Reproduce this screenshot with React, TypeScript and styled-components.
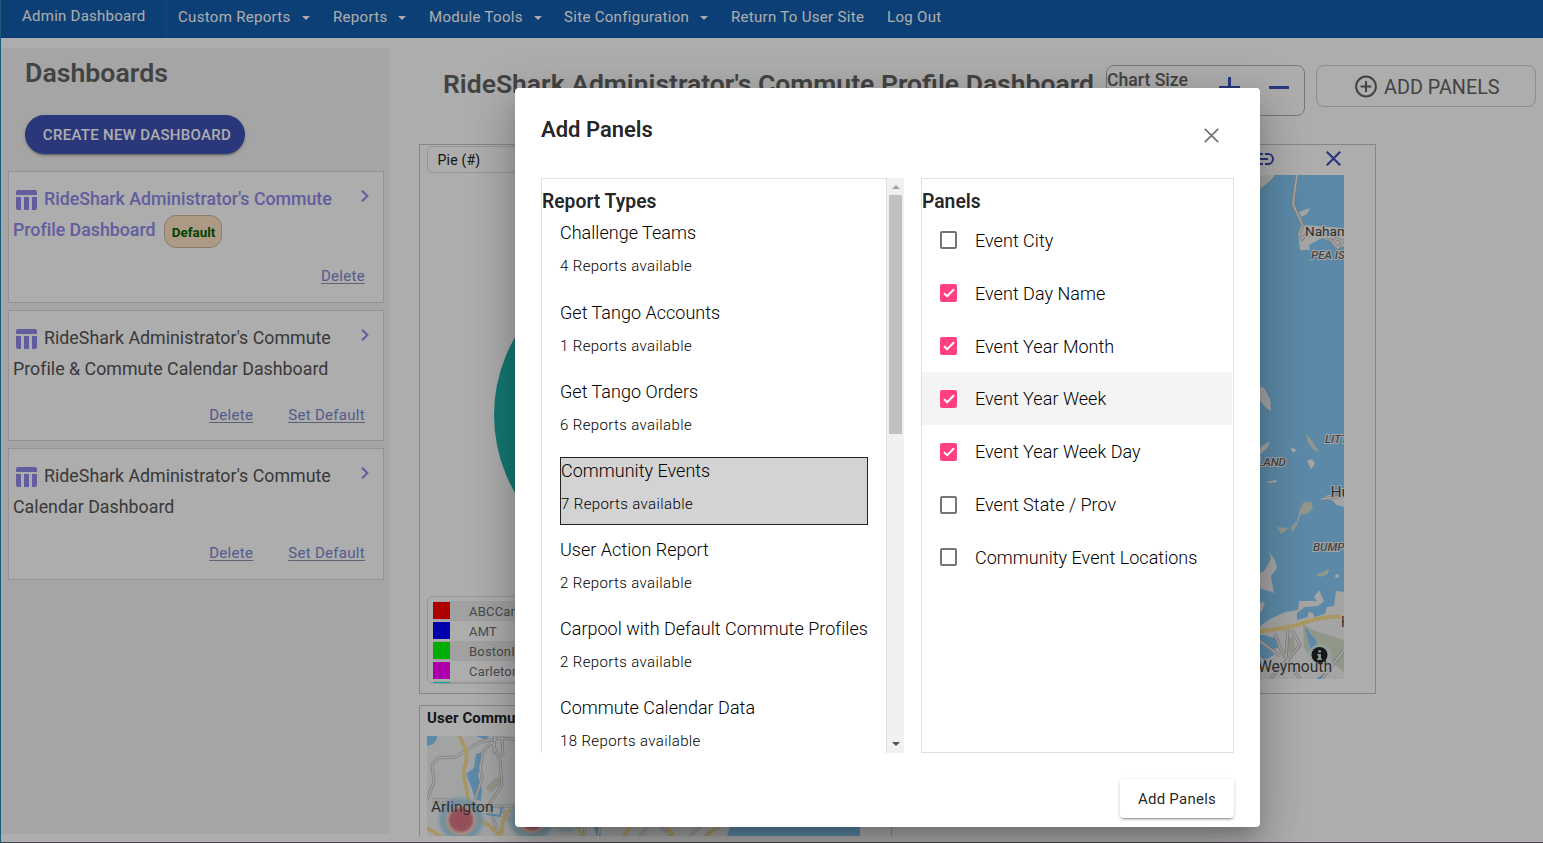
import React from 'react';
import styled, { createGlobalStyle } from 'styled-components';

const GlobalStyle = createGlobalStyle`
  * { box-sizing: border-box; }
  body {
    margin: 0;
    font-family: Roboto, "Liberation Sans", sans-serif;
    background: #fff;
  }
  ul { list-style: none; margin: 0; padding: 0; }
  h1, h2, h3, p { margin: 0; }
  button { font-family: inherit; background: none; border: 0; padding: 0; }
  svg { display: block; flex: none; }
`;

const Screen = styled.div`
  position: relative;
  width: 1543px;
  height: 843px;
  overflow: hidden;
  display: flex;
  flex-direction: column;
  background: #fff;
`;

/* ---------- navigation ---------- */

const NavBar = styled.nav`
  flex: none;
  display: flex;
  height: 38px;
  background: #135dad;
  color: #fff;
  font-size: 15px;
  letter-spacing: 0.31px;
  white-space: nowrap;
`;

const NavHome = styled.a`
  width: 167px;
  padding-left: 22px;
  line-height: 32px;
  border-right: 1px solid #1f6bbd;
  letter-spacing: 0.25px;
`;

const NavItem = styled.a<{ $width: number }>`
  display: flex;
  align-items: center;
  gap: 11px;
  width: ${(p) => p.$width}px;
  height: 34px;
`;

const NavItems = styled.div`
  display: flex;
  padding-left: 11px;
`;

const Caret = styled.span`
  margin-top: 2px;
  border: 4px solid transparent;
  border-top-color: #fff;
  border-bottom: 0;
`;

/* ---------- sidebar ---------- */

const Body = styled.div`
  flex: 1;
  display: flex;
  min-height: 0;
`;

const Sidebar = styled.aside`
  flex: none;
  width: 390px;
  height: 786px;
  margin-top: 10px;
  padding: 0 6px 0 8px;
  background: #f4f4f4;
`;

const SideTitle = styled.h1`
  padding: 8px 0 0 17px;
  height: 67px;
  font-size: 26.7px;
  line-height: 34px;
  font-weight: 600;
  color: #646464;
`;

const CreateButton = styled.button`
  display: block;
  width: 220px;
  height: 39px;
  margin: 0 0 17px 17px;
  padding-left: 4px;
  border-radius: 19.5px;
  background: #3f51b5;
  color: #fff;
  font-size: 15px;
  font-weight: 500;
  letter-spacing: 0.3px;
  box-shadow: 0 3px 1px -2px rgba(0, 0, 0, 0.2), 0 2px 2px rgba(0, 0, 0, 0.14),
    0 1px 5px rgba(0, 0, 0, 0.12);
`;

const CardList = styled.div`
  display: flex;
  flex-direction: column;
  gap: 7px;
`;

const Card = styled.article<{ $height: number }>`
  display: flex;
  flex-direction: column;
  justify-content: space-between;
  height: ${(p) => p.$height}px;
  padding: 11px 14px 0 4px;
  border: 1px solid #d9d9d9;
  background: #fff;
`;

const CardHead = styled.div`
  display: flex;
  justify-content: space-between;
`;

const CardName = styled.h3<{ $active?: boolean }>`
  font-size: 17.8px;
  line-height: 31px;
  font-weight: ${(p) => (p.$active ? 500 : 400)};
  letter-spacing: ${(p) => (p.$active ? '-0.02px' : '0.02px')};
  color: ${(p) => (p.$active ? '#8f89ea' : '#555')};
  white-space: nowrap;
`;

const NameLine = styled.span`
  display: flex;
  align-items: center;
  height: 31px;

  svg { margin: 2px 7px 0 3px; }
`;

const ChevronSlot = styled.span`
  padding-top: 7px;
`;

const DefaultBadge = styled.span`
  width: 58px;
  height: 33px;
  margin: 3px 0 0 9px;
  border: 1px solid #cdb79c;
  border-radius: 12px;
  background: #ffe4c4;
  color: #006400;
  font-size: 13.4px;
  font-weight: 700;
  letter-spacing: 0;
  line-height: 33px;
  text-align: center;
`;

const CardActions = styled.div<{ $bottom: number }>`
  display: flex;
  justify-content: flex-end;
  gap: 35px;
  padding: 0 4px ${(p) => p.$bottom}px 0;
`;

const CardLink = styled.a`
  font-size: 15px;
  line-height: 18px;
  letter-spacing: 0.3px;
  color: #7e86d2;
  text-decoration: underline;
  text-decoration-color: #8f8fa8;
  text-underline-offset: 2px;
`;

/* ---------- main area ---------- */

const Main = styled.main`
  flex: 1;
  display: flex;
  flex-direction: column;
  height: 798px;
  overflow: hidden;
`;

const MainHeader = styled.header`
  flex: none;
  display: flex;
  height: 106px;
  padding: 27px 0 0 53px;
`;

const MainTitle = styled.h1`
  width: 663px;
  font-size: 26.5px;
  line-height: 38px;
  font-weight: 600;
  color: #646464;
  white-space: nowrap;
`;

const ChartSize = styled.div`
  display: flex;
  width: 199px;
  height: 51px;
  margin-right: 11px;
  border: 1px solid #b0b0b0;
  border-radius: 8px;
  font-size: 17.6px;
  line-height: 28px;
  font-weight: 500;
  color: #646464;

  svg { margin-top: 9px; }
  svg:first-of-type { margin-left: 31px; }
  svg:last-of-type { margin-left: 29px; }
`;

const AddPanelsOutline = styled.button`
  display: flex;
  align-items: center;
  width: 220px;
  height: 42px;
  padding: 2px 0 0 36px;
  gap: 5px;
  border: 1px solid #d0d0d0;
  border-radius: 8px;
  font-size: 19.8px;
  color: #646464;

  svg { margin-top: -1px; }
`;

const PanelGrid = styled.section`
  display: grid;
  grid-template-columns: 473px 473px;
  grid-template-rows: 550px 150px;
  gap: 11px;
  padding-left: 29px;
`;

const Panel = styled.section`
  display: flex;
  flex-direction: column;
  padding: 0 7px;
  border: 1px solid #c6c6c6;
  overflow: hidden;
`;

const ChartSelect = styled.div`
  height: 27px;
  margin-top: 1px;
  padding-left: 9.5px;
  border: 1px solid #dcdcdc;
  border-radius: 5px;
  font-size: 14px;
  line-height: 27px;
  letter-spacing: 0.2px;
  color: #222;
`;

const PieArea = styled.div`
  flex: 1;
  padding: 87px 0 0 67px;
`;

const Legend = styled.ul`
  width: 440px;
  height: 88px;
  margin-bottom: 9px;
  padding: 4px 5px;
  border: 1px solid #dedede;
  border-radius: 6px;
  overflow: hidden;
`;

const LegendRow = styled.li<{ $odd: boolean }>`
  display: flex;
  align-items: center;
  gap: 19px;
  height: 20px;
  background: ${(p) => (p.$odd ? '#ededed' : '#fff')};
  font-size: 13px;
  letter-spacing: 0.2px;
  color: #6e6e6e;
`;

const Swatch = styled.span<{ $color: string }>`
  width: 17px;
  height: 17px;
  margin-top: -1px;
  background: ${(p) => p.$color};
`;

const MapTools = styled.div`
  flex: none;
  display: flex;
  justify-content: flex-end;
  align-items: center;
  gap: 52px;
  height: 30px;
  padding: 0 27.5px 2.5px 0;
`;

const PanelTitle = styled.h2`
  height: 30px;
  font-size: 15px;
  line-height: 24px;
  font-weight: 700;
  letter-spacing: 0.1px;
  color: #222;
`;

/* ---------- dialog ---------- */

const Backdrop = styled.div`
  position: absolute;
  inset: 0;
  padding: 88px 0 0 514px;
  background: rgba(0, 0, 0, 0.32);
  border-left: 1px solid #1a5c7c;
  border-bottom: 1px solid #4a464b;
`;

const Dialog = styled.div`
  display: flex;
  flex-direction: column;
  width: 745px;
  height: 739px;
  padding: 0 26px;
  border-radius: 4px;
  background: #fff;
  color: rgba(0, 0, 0, 0.87);
  box-shadow: 0 11px 15px -7px rgba(0, 0, 0, 0.2), 0 24px 38px 3px rgba(0, 0, 0, 0.14),
    0 9px 46px 8px rgba(0, 0, 0, 0.12);
`;

const DialogHeader = styled.header`
  display: flex;
  justify-content: space-between;
  height: 90px;
  padding: 26px 15px 0 0;

  svg { margin-top: 14px; }
`;

const DialogTitle = styled.h2`
  font-size: 22px;
  line-height: 31px;
  font-weight: 600;
`;

const Columns = styled.div`
  display: flex;
  gap: 17px;
  height: 575px;
`;

const ReportColumn = styled.div`
  display: flex;
  width: 363px;
`;

const ReportBox = styled.div`
  width: 346px;
  height: 575px;
  border: 1px solid #e0e0e0;
  border-bottom: 0;
  overflow: hidden;
`;

const ColumnTitle = styled.h3`
  height: 34px;
  padding-top: 11px;
  font-size: 19.3px;
  line-height: 24px;
  font-weight: 600;
`;

const ReportList = styled.ul`
  display: flex;
  flex-direction: column;
  gap: 11px;
  padding: 6px 18px 0;
`;

const ReportItem = styled.li<{ $selected: boolean }>`
  flex: none;
  height: 68px;
  padding-top: ${(p) => (p.$selected ? 0 : 1)}px;
  white-space: nowrap;
  border: ${(p) => (p.$selected ? '1px solid #222' : '0')};
  background: ${(p) => (p.$selected ? '#d3d3d3' : 'transparent')};

  &:first-child { height: 69px; }
`;

const ReportName = styled.p`
  font-size: 18px;
  line-height: 26px;
  font-weight: 300;
  letter-spacing: 0.02px;
  color: #000;
`;

const ReportCount = styled.p`
  margin-top: 8px;
  font-size: 15px;
  line-height: 24px;
  font-weight: 300;
  letter-spacing: 0.38px;
  color: #000;
`;

const ScrollTrack = styled.div`
  display: flex;
  flex-direction: column;
  align-items: center;
  width: 17px;
  padding-bottom: 1px;
  background: #f0f0f0;
`;

const ScrollArrow = styled.div<{ $down?: boolean }>`
  display: flex;
  align-items: center;
  height: 17px;
  margin-top: ${(p) => (p.$down ? 'auto' : '0')};

  &::after {
    content: '';
    border: 4px solid transparent;
    ${(p) =>
      p.$down
        ? 'border-top-color: #505050; border-bottom: 0;'
        : 'border-bottom-color: #a3a3a3; border-top: 0;'}
  }
`;

const ScrollThumb = styled.div`
  width: 13px;
  height: 239px;
  background: #c1c1c1;
`;

const PanelColumn = styled.div`
  width: 313px;
  border: 1px solid #e0e0e0;
`;

const OptionList = styled.ul`
  padding-top: 1px;
`;

const OptionRow = styled.li<{ $hover: boolean }>`
  display: flex;
  align-items: center;
  gap: 18px;
  width: 310px;
  height: 52.83px;
  padding-left: 18px;
  background: ${(p) => (p.$hover ? '#f4f4f4' : 'transparent')};
  font-size: 18px;
  font-weight: 300;
  letter-spacing: 0.03px;
  color: #000;
  white-space: nowrap;
`;

const CheckBox = styled.span<{ $checked: boolean }>`
  display: flex;
  align-items: center;
  justify-content: center;
  width: 17px;
  height: 18px;
  border-radius: 2px;
  border: ${(p) => (p.$checked ? '0' : '2px solid #757575')};
  background: ${(p) => (p.$checked ? '#ff4081' : '#fff')};
`;

const DialogFooter = styled.footer`
  display: flex;
  justify-content: flex-end;
  padding-top: 26px;
`;

const SubmitButton = styled.button`
  width: 114px;
  height: 39px;
  border-radius: 4px;
  background: #fff;
  font-size: 15px;
  font-weight: 400;
  letter-spacing: 0.26px;
  color: rgba(0, 0, 0, 0.87);
  box-shadow: 0 3px 1px -2px rgba(0, 0, 0, 0.2), 0 2px 2px rgba(0, 0, 0, 0.14),
    0 1px 5px rgba(0, 0, 0, 0.12);
`;

/* ---------- icons ---------- */

const TableIcon = () => (
  <svg width="21" height="20" viewBox="0 0 21 20" fill="#8f89ea">
    <path d="M2 0h17a2 2 0 0 1 2 2v3H0V2a2 2 0 0 1 2-2zM0 7h5v13H2a2 2 0 0 1-2-2zM8 7h5v13H8zM16 7h5v11a2 2 0 0 1-2 2h-3z" />
  </svg>
);

const Chevron = () => (
  <svg width="8" height="12" viewBox="0 0 8 12" fill="none" stroke="#8f89ea" strokeWidth="2">
    <path d="M1 0.7 6.4 6 1 11.3" />
  </svg>
);

const Cross = ({ color, thick }: { color: string; thick: number }) => (
  <svg width="15" height="15" viewBox="0 0 15 15" stroke={color} strokeWidth={thick}>
    <path d="M0.8 0.8 14.2 14.2M14.2 0.8 0.8 14.2" />
  </svg>
);

const LinkIcon = () => (
  <svg width="20" height="12" viewBox="0 0 20 12" fill="none" stroke="#3f51b5" strokeWidth="2">
    <path d="M9 1H6a5 5 0 0 0 0 10h3M11 1h3a5 5 0 0 1 0 10h-3M6 6h8" />
  </svg>
);

const PlusIcon = () => (
  <svg width="21" height="25" viewBox="0 0 21 25" stroke="#3f51b5" strokeWidth="3">
    <path d="M0 12.5h21M10.5 2v21" />
  </svg>
);

const MinusIcon = () => (
  <svg width="21" height="25" viewBox="0 0 21 25" stroke="#3f51b5" strokeWidth="3">
    <path d="M0 12.5h20" />
  </svg>
);

const CirclePlus = () => (
  <svg width="26" height="26" viewBox="0 0 26 26" fill="none" stroke="#646464" strokeWidth="2">
    <circle cx="13" cy="12.5" r="9.9" />
    <path d="M7.6 12.5h10.8M13 7.1v10.8" />
  </svg>
);

const Tick = () => (
  <svg width="12" height="10" viewBox="0 0 12 10" fill="none" stroke="#fff" strokeWidth="2">
    <path d="M1 5.2 4.2 8.2 11 1.2" />
  </svg>
);

/* ---------- maps and charts ---------- */

const Pie = () => (
  <svg width="310" height="310" viewBox="0 0 310 310">
    <circle cx="155" cy="155" r="155" fill="#20b2aa" />
  </svg>
);

const water = '#87cbf7';
const land = '#f1f2f0';
const park = '#d5dfca';

const harborRoads =
  'M1297 175 1294 196 1293 204 1303 226M1303 226 1299 234 1302 239 1308 232M1327 236 1338 248 1343 241 1327 236M1322 499 1344 496M1275 634 1281 650 1288 660 1300 645 1292 630M1288 628 1286 658M1260 641 1280 656M1344 650 1322 679M1270 679 1287 660 1300 679';

const HarborMap = () => (
  <svg width="433" height="504" viewBox="911 175 433 504">
    <rect x="911" y="175" width="433" height="504" fill={water} />
    <g fill={land}>
      <path d="M1240 175h35l-5 6-10 8-20 10z" />
      <path d="M1299 212 1310 208 1307 214 1301 217z" />
      <path d="M1301 225 1298 232 1300 250 1310 250 1309 245 1322 238 1330 241 1336 249 1340 248 1344 246V228L1318 226z" />
      <path d="M1255 384 1264 388 1270 399 1271 411 1266 408 1258 398z" />
      <path d="M1255 456 1262 446 1270 441 1268 447 1260 455z" />
      <path d="M1290 447 1297 450 1293 453zM1307 461 1312 459 1315 464 1311 469zM1266 482 1276 480 1277 482 1270 483z" />
      <path d="M1320 500 1328 495 1344 497V507L1337 505 1332 500z" />
      <path d="M1268 551 1275 560 1277 568 1271 576 1274 593 1262 589 1250 585V575L1263 572 1268 565 1271 558z" />
      <circle cx="1337" cy="576" r="2" />
      <path d="M1255 603 1265 602 1262 611 1255 615z" />
      <path d="M1240 640 1260 626 1270 619 1285 612 1298 610 1299 601 1317 601 1314 597 1319 590 1324 601 1318 606 1305 607 1297 613 1297 620 1308 617 1308 612 1313 613 1314 617 1325 614 1327 607 1334 606 1336 591 1344 592V679H1240z" />
    </g>
    <g fill={park}>
      <path d="M1306 434 1311 439 1319 452 1315 451 1308 443z" />
      <path d="M1300 508 1304 502 1311 502 1313 508 1307 514 1301 514 1297 525 1292 532 1291 527 1297 521zM1277 527 1289 528 1281 534z" />
      <path d="M1316 575 1329 569 1328 574 1320 577z" />
      <path d="M1303 625 1318 632 1344 640V672L1330 660 1316 665 1304 648zM1285 640 1293 636 1296 650 1288 654z" />
    </g>
    <g fill={water}>
      <path d="M1255 633 1275 638 1278 648 1271 650 1274 655 1265 660 1255 655z" />
      <path d="M1305 625 1309 632 1316 640 1317 652 1322 659 1312 656 1308 640zM1316 679 1327 671 1322 679z" />
    </g>
    <path d={harborRoads} fill="none" stroke="#b8b4b4" strokeWidth="3.2" />
    <path d={harborRoads} fill="none" stroke="#f4f4f4" strokeWidth="1.6" />
    <path d="M1250 632Q1284 630 1306 622 1324 616 1344 617" fill="none" stroke="#fbe094" strokeWidth="4" />
    <circle cx="1320" cy="656" r="12" fill="#e3eff5" opacity="0.7" />
    <g fill="#444" stroke="#f4f4f4" strokeWidth="2" paintOrder="stroke" fontFamily="Roboto, sans-serif">
      <text x="1305" y="236" fontSize="13.6">Naham</text>
      <text x="1330.5" y="497" fontSize="15.5">Hu</text>
      <text x="1341" y="627" fontSize="14">H</text>
      <text x="1258" y="672" fontSize="15.6">Weymouth</text>
      <g fontSize="11.6" fontStyle="italic" fontWeight="500" fill="#666">
        <text x="1311" y="259">PEA IS</text>
        <text x="1325" y="443">LITT</text>
        <text x="1257" y="466">LAND</text>
        <text x="1313" y="551">BUMPK</text>
      </g>
    </g>
    <circle cx="1319.5" cy="655" r="8" fill="#222" />
    <path d="M1318.3 650.2h2.6v2.4h-2.6zM1317.3 654h3.6v4.4h1v1.6h-4.8v-1.6h1.2v-2.8h-1z" fill="#d6e6ee" />
  </svg>
);

const cityRoads =
  'M427 800 434 782 432 765 438 758 455 757 480 742 500 738 520 740M432 800 452 800 475 806 520 806M480 770 483 752 492 742 500 760 502 785 488 806 500 836M495 736 494 755M502 736 503 757M475 800 482 778 480 765M500 806 520 836M440 800 460 836M600 826 598 836M585 826 584 836M640 836 648 826M660 826 672 836M690 836 700 826M720 826 705 836';

const CityMap = () => (
  <svg width="433" height="100" viewBox="427 736 433 100">
    <defs>
      <radialGradient id="heat">
        <stop offset="0" stopColor="#d8707f" />
        <stop offset="0.4" stopColor="#dc7c8a" />
        <stop offset="0.52" stopColor="#f5cfc0" />
        <stop offset="0.66" stopColor="#a9d3ea" />
        <stop offset="0.78" stopColor="#a9d3ea" stopOpacity="0.8" />
        <stop offset="1" stopColor="#d5e8f2" stopOpacity="0" />
      </radialGradient>
    </defs>
    <rect x="427" y="736" width="433" height="100" fill="#eff2f2" />
    <path d="M476 754 483 752 480 763 478 776 482 790 481 801 475 799 471 786 466 774 474 768z" fill={water} />
    <path d="M730 826 727 836H860V736H740zM596 820 594 828 597 836 601 836 599 826zM476 736 489 736 486 740zM427 736h10q0 8-10 10z" fill={water} />
    <path d="M486 787 493 780 501 776 500 785 490 793z" fill={park} />
    <g fill="none">
      <path d={cityRoads} stroke="#bbb8bb" strokeWidth="3" />
      <path d={cityRoads} stroke="#f3f3f3" strokeWidth="1.5" />
      <path
        d="M459 736Q470 752 465 766 462 774 466 786L469 806Q474 818 490 826L500 836M427 828 444 838M520 804Q500 812 502 834M575 820 583 838M634 822 622 838M664 820 674 838M722 820 706 838"
        stroke="#f8dc8e"
        strokeWidth="3.6"
      />
      <path d="M486 814 500 816 502 806M450 832 458 836" stroke={water} strokeWidth="2" />
    </g>
    <circle cx="461" cy="820" r="26" fill="url(#heat)" />
    <circle cx="532" cy="818" r="26" fill="url(#heat)" />
    <circle cx="566" cy="814" r="22" fill="url(#heat)" opacity="0.6" />
    <text x="431" y="811.5" fontSize="15.5" fill="#484848" fontFamily="Roboto, sans-serif">
      Arlington
    </text>
  </svg>
);

/* ---------- data ---------- */

const navItems = [
  { label: 'Custom Reports', width: 155, menu: true },
  { label: 'Reports', width: 96, menu: true },
  { label: 'Module Tools', width: 135, menu: true },
  { label: 'Site Configuration', width: 167, menu: true },
  { label: 'Return To User Site', width: 156, menu: false },
  { label: 'Log Out', width: 80, menu: false },
];

const dashboards = [
  { lines: ["RideShark Administrator's Commute", 'Profile Dashboard'], isDefault: true, height: 132 },
  { lines: ["RideShark Administrator's Commute", 'Profile & Commute Calendar Dashboard'], isDefault: false, height: 131 },
  { lines: ["RideShark Administrator's Commute", 'Calendar Dashboard'], isDefault: false, height: 132 },
];

const legend = [
  ['ABCCar', '#ff0000'],
  ['AMT', '#0000ff'],
  ['BostonI', '#00ff00'],
  ['Carleton', '#ff00ff'],
  ['', '#00ffff'],
];

const reports: [string, number][] = [
  ['Challenge Teams', 4],
  ['Get Tango Accounts', 1],
  ['Get Tango Orders', 6],
  ['Community Events', 7],
  ['User Action Report', 2],
  ['Carpool with Default Commute Profiles', 2],
  ['Commute Calendar Data', 18],
];

const options: [string, boolean][] = [
  ['Event City', false],
  ['Event Day Name', true],
  ['Event Year Month', true],
  ['Event Year Week', true],
  ['Event Year Week Day', true],
  ['Event State / Prov', false],
  ['Community Event Locations', false],
];

export default function App() {
  return (
    <Screen>
      <GlobalStyle />
      <NavBar>
        <NavHome>Admin Dashboard</NavHome>
        <NavItems>
          {navItems.map((n) => (
            <NavItem key={n.label} $width={n.width}>
              {n.label}
              {n.menu && <Caret />}
            </NavItem>
          ))}
        </NavItems>
      </NavBar>
      <Body>
        <Sidebar>
          <SideTitle>Dashboards</SideTitle>
          <CreateButton>CREATE NEW DASHBOARD</CreateButton>
          <CardList>
            {dashboards.map((d) => (
              <Card key={d.lines[1]} $height={d.height}>
                <CardHead>
                  <CardName $active={d.isDefault}>
                    <NameLine>
                      <TableIcon />
                      {d.lines[0]}
                    </NameLine>
                    <NameLine>
                      {d.lines[1]}
                      {d.isDefault && <DefaultBadge>Default</DefaultBadge>}
                    </NameLine>
                  </CardName>
                  <ChevronSlot>
                    <Chevron />
                  </ChevronSlot>
                </CardHead>
                <CardActions $bottom={d.height - 115}>
                  <CardLink>Delete</CardLink>
                  {!d.isDefault && <CardLink>Set Default</CardLink>}
                </CardActions>
              </Card>
            ))}
          </CardList>
        </Sidebar>
        <Main>
          <MainHeader>
            <MainTitle>RideShark Administrator's Commute Profile Dashboard</MainTitle>
            <ChartSize>
              Chart Size
              <PlusIcon />
              <MinusIcon />
            </ChartSize>
            <AddPanelsOutline>
              <CirclePlus />
              ADD PANELS
            </AddPanelsOutline>
          </MainHeader>
          <PanelGrid>
            <Panel>
              <ChartSelect>Pie (#)</ChartSelect>
              <PieArea>
                <Pie />
              </PieArea>
              <Legend>
                {legend.map(([name, color], i) => (
                  <LegendRow key={color} $odd={i % 2 === 0}>
                    <Swatch $color={color} />
                    {name}
                  </LegendRow>
                ))}
              </Legend>
            </Panel>
            <Panel>
              <MapTools>
                <LinkIcon />
                <Cross color="#3f51b5" thick={2.2} />
              </MapTools>
              <HarborMap />
            </Panel>
            <Panel>
              <PanelTitle>User Commu</PanelTitle>
              <CityMap />
            </Panel>
          </PanelGrid>
        </Main>
      </Body>
      <Backdrop>
        <Dialog>
          <DialogHeader>
            <DialogTitle>Add Panels</DialogTitle>
            <Cross color="#757575" thick={1.8} />
          </DialogHeader>
          <Columns>
            <ReportColumn>
              <ReportBox>
                <ColumnTitle>Report Types</ColumnTitle>
                <ReportList>
                  {reports.map(([name, count]) => (
                    <ReportItem key={name} $selected={name === 'Community Events'}>
                      <ReportName>{name}</ReportName>
                      <ReportCount>{count} Reports available</ReportCount>
                    </ReportItem>
                  ))}
                </ReportList>
              </ReportBox>
              <ScrollTrack>
                <ScrollArrow />
                <ScrollThumb />
                <ScrollArrow $down />
              </ScrollTrack>
            </ReportColumn>
            <PanelColumn>
              <ColumnTitle>Panels</ColumnTitle>
              <OptionList>
                {options.map(([name, checked]) => (
                  <OptionRow key={name} $hover={name === 'Event Year Week'}>
                    <CheckBox $checked={checked}>{checked && <Tick />}</CheckBox>
                    {name}
                  </OptionRow>
                ))}
              </OptionList>
            </PanelColumn>
          </Columns>
          <DialogFooter>
            <SubmitButton>Add Panels</SubmitButton>
          </DialogFooter>
        </Dialog>
      </Backdrop>
    </Screen>
  );
}
